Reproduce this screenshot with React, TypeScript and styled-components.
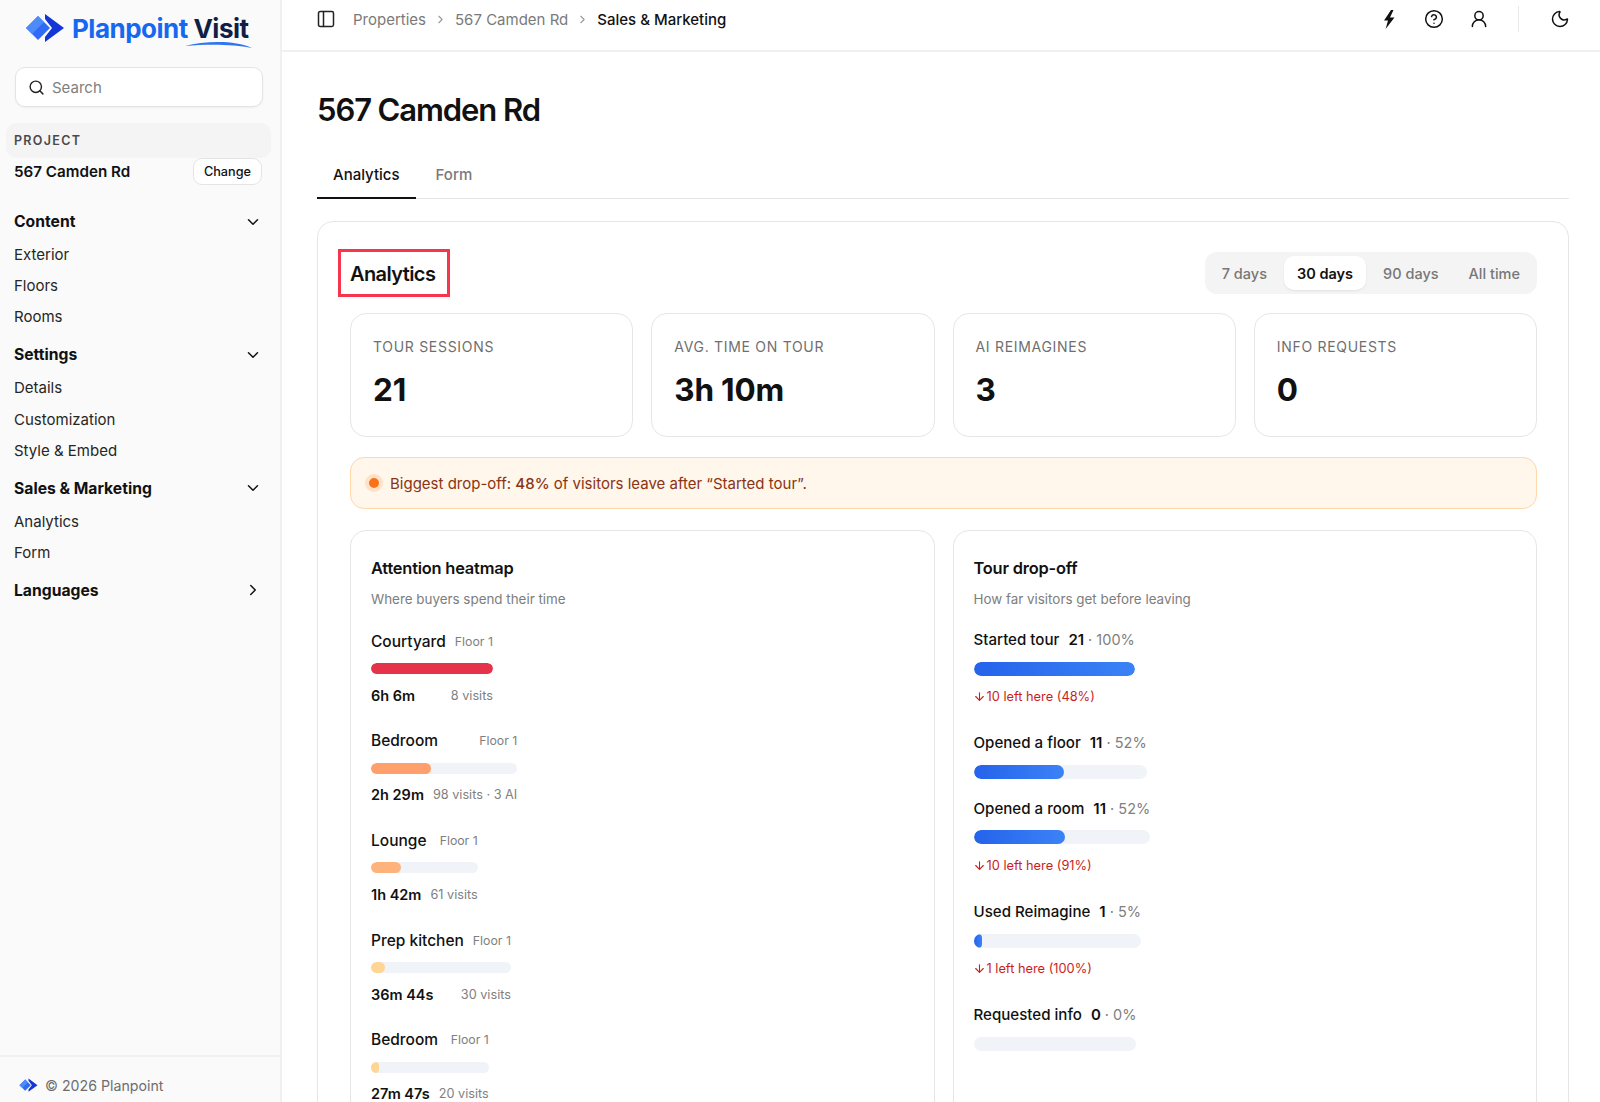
import * as React from 'react';
import styled, { createGlobalStyle } from 'styled-components';
import {
  ArrowDown,
  ChevronDown,
  ChevronRight,
  CircleHelp,
  Moon,
  PanelLeft,
  Search,
  UserRound,
} from 'lucide-react';

const GlobalStyle = createGlobalStyle`
  html, body, #root {
    height: 100%;
  }
  body {
    margin: 0;
    background: #fff;
    color: #111;
    font-family: Inter, "Noto Sans", sans-serif;
    overflow: hidden;
  }
  * {
    box-sizing: border-box;
  }
`;

const navGroups = [
  { title: 'Content', open: true, items: ['Exterior', 'Floors', 'Rooms'] },
  { title: 'Settings', open: true, items: ['Details', 'Customization', 'Style & Embed'] },
  { title: 'Sales & Marketing', open: true, items: ['Analytics', 'Form'] },
  { title: 'Languages', open: false, items: [] as string[] },
];

const stats = [
  { label: 'TOUR SESSIONS', value: '21' },
  { label: 'AVG. TIME ON TOUR', value: '3h 10m' },
  { label: 'AI REIMAGINES', value: '3' },
  { label: 'INFO REQUESTS', value: '0' },
];

const ranges = ['7 days', '30 days', '90 days', 'All time'];

const heatRows = [
  { name: 'Courtyard', time: '6h 6m', visits: '8 visits', pct: 100, color: '#e5344a' },
  { name: 'Bedroom', time: '2h 29m', visits: '98 visits · 3 AI', pct: 41, color: '#ff9f6b' },
  { name: 'Lounge', time: '1h 42m', visits: '61 visits', pct: 28, color: '#ffb37c' },
  { name: 'Prep kitchen', time: '36m 44s', visits: '30 visits', pct: 10, color: '#fed593' },
  { name: 'Bedroom', time: '27m 47s', visits: '20 visits', pct: 7, color: '#fed593' },
];

const dropRows = [
  { name: 'Started tour', count: '21', pct: 100, note: '10 left here (48%)' },
  { name: 'Opened a floor', count: '11', pct: 52, note: '' },
  { name: 'Opened a room', count: '11', pct: 52, note: '10 left here (91%)' },
  { name: 'Used Reimagine', count: '1', pct: 5, note: '1 left here (100%)' },
  { name: 'Requested info', count: '0', pct: 0, note: '' },
];

const LogoMark: React.FC<{ size: number }> = ({ size }) => (
  <svg width={size} height={size * 0.75} viewBox="0 0 40 30">
    <path d="M13 3 L25 15 L13 27 L1 15 Z" fill="#2f6bf6" />
    <path d="M13 3 L19 9 L7 21 L1 15 Z" fill="#4d8bfa" />
    <path d="M20 1 L39 15 L20 29 L20 24 L27 15 L20 6 Z" fill="#1336d6" />
  </svg>
);

const App: React.FC = () => {
  return (
    <Shell>
      <GlobalStyle />
      <Sidebar>
        <LogoRow>
          <LogoMark size={40} />
          <LogoText>
            Planpoint <LogoDark>Visit</LogoDark>
            <Swoosh width="68" height="8" viewBox="0 0 68 8">
              <path d="M0 5 C20 0 50 -1 67 7 C48 3 22 3 0 5 Z" fill="#2f75ee" />
            </Swoosh>
          </LogoText>
        </LogoRow>
        <SearchBox>
          <Search size={17} color="#222" />
          <span>Search</span>
        </SearchBox>
        <ProjectLabel>PROJECT</ProjectLabel>
        <ProjectRow>
          <ProjectName>567 Camden Rd</ProjectName>
          <ChangeButton>Change</ChangeButton>
        </ProjectRow>
        <Nav>
          {navGroups.map((group) => (
            <NavGroup key={group.title}>
              <NavHeader>
                {group.title}
                {group.open ? <ChevronDown size={18} /> : <ChevronRight size={18} />}
              </NavHeader>
              {group.items.map((item) => (
                <NavItem key={item}>{item}</NavItem>
              ))}
            </NavGroup>
          ))}
        </Nav>
        <SidebarFooter>
          <LogoMark size={19} />
          © 2026 Planpoint
        </SidebarFooter>
      </Sidebar>
      <Main>
        <TopBar>
          <Crumbs>
            <PanelLeft size={20} color="#222" strokeWidth={1.8} />
            <Crumb>Properties</Crumb>
            <ChevronRight size={13} color="#999" />
            <Crumb>567 Camden Rd</Crumb>
            <ChevronRight size={13} color="#999" />
            <Crumb $current>Sales &amp; Marketing</Crumb>
          </Crumbs>
          <TopActions>
            <BoltIcon width="12" height="19" viewBox="0 0 12 19">
              <path d="M8 0 L1 10.5 H5 L2.6 19 L11.5 7.5 H7 L10.5 0 Z" fill="#111" />
            </BoltIcon>
            <CircleHelp size={20} color="#111" strokeWidth={1.8} />
            <UserRound size={20} color="#111" strokeWidth={1.8} />
            <ActionDivider />
            <Moon size={20} color="#111" strokeWidth={1.8} />
          </TopActions>
        </TopBar>
        <Content>
          <PageTitle>567 Camden Rd</PageTitle>
          <Tabs>
            <Tab $active>Analytics</Tab>
            <Tab>Form</Tab>
          </Tabs>
          <Panel>
            <PanelHeader>
              <PanelTitle>Analytics</PanelTitle>
              <Segments>
                {ranges.map((range) => (
                  <Segment key={range} $active={range === '30 days'}>
                    {range}
                  </Segment>
                ))}
              </Segments>
            </PanelHeader>
            <StatGrid>
              {stats.map((stat) => (
                <StatCard key={stat.label}>
                  <StatLabel>{stat.label}</StatLabel>
                  <StatValue>{stat.value}</StatValue>
                </StatCard>
              ))}
            </StatGrid>
            <Alert>
              <AlertDot />
              <span>
                Biggest drop-off: <AlertStrong>48%</AlertStrong> of visitors leave after “Started tour”.
              </span>
            </Alert>
            <ChartGrid>
              <ChartCard>
                <ChartTitle>Attention heatmap</ChartTitle>
                <ChartSub>Where buyers spend their time</ChartSub>
                <HeatList>
                  {heatRows.map((row) => (
                    <HeatRow key={row.name + row.time}>
                      <SplitLine>
                        <RowName $size={15.5}>{row.name}</RowName>
                        <Muted $size={12.3}>Floor 1</Muted>
                      </SplitLine>
                      <Track $height={11}>
                        <Fill style={{ width: `${row.pct}%`, background: row.color }} />
                      </Track>
                      <SplitLine>
                        <RowTime>{row.time}</RowTime>
                        <Muted $size={12.7}>{row.visits}</Muted>
                      </SplitLine>
                    </HeatRow>
                  ))}
                </HeatList>
              </ChartCard>
              <ChartCard>
                <ChartTitle>Tour drop-off</ChartTitle>
                <ChartSub>How far visitors get before leaving</ChartSub>
                <DropList>
                  {dropRows.map((row) => (
                    <DropRow key={row.name}>
                      <DropLine>
                        <RowName $size={15.1}>{row.name}</RowName>
                        <RowCount>{row.count}</RowCount>
                        <Muted $size={14.5}>· {row.pct}%</Muted>
                      </DropLine>
                      <Track $height={14}>
                        {row.pct > 0 && <BlueFill style={{ width: `${row.pct}%` }} />}
                      </Track>
                      {row.note && (
                        <DropNote>
                          <ArrowDown size={13} />
                          {row.note}
                        </DropNote>
                      )}
                    </DropRow>
                  ))}
                </DropList>
              </ChartCard>
            </ChartGrid>
          </Panel>
        </Content>
      </Main>
    </Shell>
  );
};

const Shell = styled.div`
  display: flex;
  height: 100vh;
  overflow: hidden;
`;

const Sidebar = styled.aside`
  flex: 0 0 282px;
  display: flex;
  flex-direction: column;
  background: #fafafa;
  border-right: 2px solid #f0f0f0;
`;

const LogoRow = styled.div`
  height: 67px;
  padding: 0 0 11px 25px;
  display: flex;
  align-items: center;
  gap: 7px;
`;

const LogoText = styled.div`
  position: relative;
  font-size: 26px;
  font-weight: 700;
  letter-spacing: -0.5px;
  color: #1668f0;
  white-space: nowrap;
`;

const LogoDark = styled.span`
  color: #0f1f45;
`;

const Swoosh = styled.svg`
  position: absolute;
  right: -4px;
  bottom: -5px;
`;

const SearchBox = styled.div`
  height: 40px;
  margin: 0 17px 16px 15px;
  padding: 0 12px;
  display: flex;
  align-items: center;
  gap: 7px;
  background: #fff;
  border: 1px solid #e4e4e4;
  border-radius: 10px;
  box-shadow: 0 1px 2px rgba(0, 0, 0, 0.05);
  color: #808080;
  font-size: 15px;
`;

const ProjectLabel = styled.div`
  height: 35px;
  margin: 0 9px 0 6px;
  padding-left: 8px;
  display: flex;
  align-items: center;
  background: #f4f4f4;
  border-radius: 10px;
  color: #4a4a4a;
  font-size: 12.5px;
  font-weight: 600;
  letter-spacing: 1.3px;
`;

const ProjectRow = styled.div`
  height: 27px;
  margin: 0 18px 19px 14px;
  display: flex;
  align-items: center;
  justify-content: space-between;
`;

const ProjectName = styled.div`
  font-size: 15.2px;
  font-weight: 600;
`;

const ChangeButton = styled.div`
  height: 27px;
  padding: 0 10px;
  display: flex;
  align-items: center;
  background: #fff;
  border: 1px solid #e4e4e4;
  border-radius: 9px;
  font-size: 12.7px;
  font-weight: 500;
`;

const Nav = styled.nav`
  flex: 1;
  padding: 0 18px 0 14px;
  display: flex;
  flex-direction: column;
  gap: 4.8px;
`;

const NavGroup = styled.div`
  display: flex;
  flex-direction: column;
`;

const NavHeader = styled.div`
  height: 35px;
  display: flex;
  align-items: center;
  justify-content: space-between;
  font-size: 15.7px;
  font-weight: 700;
`;

const NavItem = styled.div`
  height: 31.2px;
  display: flex;
  align-items: center;
  color: #262626;
  font-size: 15px;
`;

const SidebarFooter = styled.div`
  height: 47px;
  padding: 11px 0 0 19px;
  display: flex;
  align-items: center;
  gap: 7px;
  border-top: 2px solid #f0f0f0;
  color: #6e6e6e;
  font-size: 14.2px;
`;

const Main = styled.main`
  flex: 1;
  min-width: 0;
  display: flex;
  flex-direction: column;
`;

const TopBar = styled.header`
  flex: 0 0 52px;
  padding: 0 30px 12px 34px;
  display: flex;
  align-items: center;
  justify-content: space-between;
  border-bottom: 2px solid #f0f0f0;
`;

const Crumbs = styled.div`
  display: flex;
  align-items: center;
  gap: 8px;
  font-size: 15px;
  svg:first-child {
    margin-right: 9px;
  }
`;

const Crumb = styled.span<{ $current?: boolean }>`
  color: ${(props) => (props.$current ? '#111' : '#7a7a7a')};
  font-weight: ${(props) => (props.$current ? 500 : 400)};
`;

const TopActions = styled.div`
  display: flex;
  align-items: center;
  gap: 25px;
`;

const BoltIcon = styled.svg`
  margin-right: 4px;
`;

const ActionDivider = styled.div`
  width: 1px;
  height: 26px;
  margin: 0 6px 0 4px;
  background: #e8e8e8;
`;

const Content = styled.div`
  padding: 38px 31px 0 35px;
`;

const PageTitle = styled.h1`
  margin: 0 0 21px;
  font-size: 31px;
  line-height: 40px;
  font-weight: 600;
  letter-spacing: -1.1px;
`;

const Tabs = styled.div`
  height: 48px;
  display: flex;
  border-bottom: 1px solid #e5e5e5;
`;

const Tab = styled.div<{ $active?: boolean }>`
  height: 48px;
  padding: 0 16px;
  margin-right: 4px;
  display: flex;
  align-items: center;
  border-bottom: 2px solid ${(props) => (props.$active ? '#111' : 'transparent')};
  color: ${(props) => (props.$active ? '#111' : '#7a7a7a')};
  font-size: 15px;
  font-weight: 500;
`;

const Panel = styled.section`
  margin-top: 22px;
  padding: 27px 31px 40px 32px;
  background: #fff;
  border: 1px solid #e6e6e6;
  border-radius: 16px;
`;

const PanelHeader = styled.div`
  margin-bottom: 16px;
  display: flex;
  align-items: center;
  justify-content: space-between;
`;

const PanelTitle = styled.h2`
  height: 48px;
  margin: 0 0 0 -12px;
  padding: 1px 12px 0 9px;
  display: flex;
  align-items: center;
  border: 3px solid #f5364c;
  font-size: 20px;
  font-weight: 600;
  letter-spacing: -0.6px;
`;

const Segments = styled.div`
  padding: 4px;
  display: flex;
  gap: 4px;
  background: #f4f4f4;
  border-radius: 12px;
`;

const Segment = styled.div<{ $active?: boolean }>`
  height: 34px;
  padding: 0 13px;
  display: flex;
  align-items: center;
  background: ${(props) => (props.$active ? '#fff' : 'transparent')};
  border-radius: 10px;
  box-shadow: ${(props) => (props.$active ? '0 1px 2px rgba(0,0,0,0.08)' : 'none')};
  color: ${(props) => (props.$active ? '#111' : '#777')};
  font-size: 14.5px;
  font-weight: ${(props) => (props.$active ? 600 : 500)};
`;

const StatGrid = styled.div`
  display: grid;
  grid-template-columns: repeat(4, 1fr);
  gap: 18px;
`;

const StatCard = styled.div`
  height: 124px;
  padding: 23px 22px 0;
  border: 1px solid #e6e6e6;
  border-radius: 16px;
`;

const StatLabel = styled.div`
  color: #6f6f6f;
  font-size: 14px;
  line-height: 20px;
  letter-spacing: 0.7px;
`;

const StatValue = styled.div`
  margin-top: 12px;
  font-size: 31.5px;
  line-height: 42px;
  font-weight: 700;
  letter-spacing: -0.2px;
`;

const Alert = styled.div`
  height: 52px;
  margin-top: 20px;
  padding: 0 14px;
  display: flex;
  align-items: center;
  gap: 7px;
  background: #fff6ec;
  border: 1px solid #fed7aa;
  border-radius: 14px;
  color: #8a3412;
  font-size: 15px;
`;

const AlertDot = styled.span`
  width: 18px;
  height: 18px;
  border-radius: 50%;
  background: #f97316;
  border: 4px solid #ffe0c8;
`;

const AlertStrong = styled.strong`
  font-weight: 500;
`;

const ChartGrid = styled.div`
  margin-top: 21px;
  display: grid;
  grid-template-columns: 1fr 1fr;
  gap: 18px;
`;

const ChartCard = styled.div`
  height: 620px;
  padding: 25px 20px 0;
  border: 1px solid #e6e6e6;
  border-radius: 16px;
`;

const ChartTitle = styled.h3`
  margin: 0;
  font-size: 16.4px;
  line-height: 24px;
  font-weight: 600;
  letter-spacing: -0.2px;
`;

const ChartSub = styled.div`
  margin-top: 9px;
  color: #7d7d7d;
  font-size: 13.4px;
  line-height: 20px;
`;

const HeatList = styled.div`
  margin-top: 22px;
  display: flex;
  flex-direction: column;
  align-items: flex-start;
  gap: 25.7px;
`;

const HeatRow = styled.div`
  width: fit-content;
  display: flex;
  flex-direction: column;
`;

const SplitLine = styled.div`
  min-height: 20px;
  display: flex;
  align-items: center;
  justify-content: space-between;
  gap: 9px;
`;

const RowName = styled.span<{ $size: number }>`
  font-size: ${(props) => props.$size}px;
  font-weight: 500;
`;

const RowTime = styled.span`
  font-size: 14.5px;
  font-weight: 600;
`;

const RowCount = styled.span`
  margin-left: 5px;
  font-size: 15px;
  font-weight: 600;
`;

const Muted = styled.span<{ $size: number }>`
  color: #808080;
  font-size: ${(props) => props.$size}px;
`;

const Track = styled.div<{ $height: number }>`
  height: ${(props) => props.$height}px;
  margin: 12px 0 11px;
  background: #f0f3f8;
  border-radius: 999px;
  overflow: hidden;
`;

const Fill = styled.div`
  height: 100%;
  border-radius: 999px;
`;

const BlueFill = styled(Fill)`
  background: linear-gradient(90deg, #2563eb, #3b82f6);
`;

const DropList = styled.div`
  margin-top: 20.5px;
  display: flex;
  flex-direction: column;
  align-items: flex-start;
  gap: 8.7px;
`;

const DropRow = styled.div`
  width: fit-content;
  display: flex;
  flex-direction: column;
`;

const DropLine = styled.div`
  height: 20px;
  display: flex;
  align-items: center;
  gap: 4px;
  white-space: nowrap;
`;

const DropNote = styled.div`
  height: 20px;
  margin: 0 0 17.5px -1px;
  display: flex;
  align-items: center;
  gap: 1px;
  color: #c81e1e;
  font-size: 12.8px;
`;

export default App;
